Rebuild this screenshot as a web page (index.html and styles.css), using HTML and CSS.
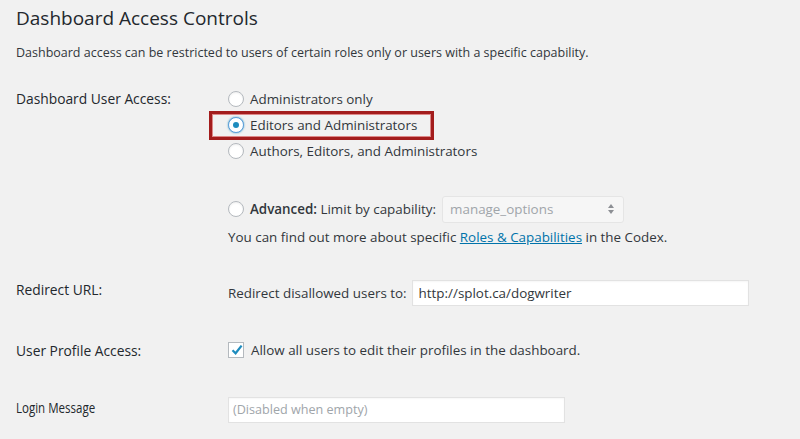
FILE: index.html
```html
<!DOCTYPE html>
<html>
<head>
<meta charset="utf-8">
<link rel="stylesheet" href="styles.css">
</head>
<body>
<div class="page">
  <h2 class="title">Dashboard Access Controls</h2>
  <p class="desc">Dashboard access can be restricted to users of certain roles only or users with a specific capability.</p>

  <div class="row row-access">
    <div class="label label-access">Dashboard User Access:</div>
    <div class="field">
      <label class="opt"><span class="radio"></span><span>Administrators only</span></label>
      <label class="opt opt-marked"><span class="radio checked"></span><span>Editors and Administrators</span></label>
      <label class="opt"><span class="radio"></span><span>Authors, Editors, and Administrators</span></label>
      <div class="opt opt-adv">
        <span class="radio"></span><span><b>Advanced:</b> Limit by capability:</span>
        <span class="select"><span>manage_options</span>
          <svg class="arrows" width="8" height="12" viewBox="0 0 8 12"><path d="M4 1 L7 5 H1 Z" fill="#8c8f94"/><path d="M4 11 L7 7 H1 Z" fill="#8c8f94"/></svg>
        </span>
      </div>
      <div class="codex">You can find out more about specific <a href="#">Roles &amp; Capabilities</a> in the Codex.</div>
    </div>
  </div>

  <div class="row row-redirect">
    <div class="label">Redirect URL:</div>
    <div class="field inline">
      <span>Redirect disallowed users to:</span>
      <span class="input url">http://splot.ca/dogwriter</span>
    </div>
  </div>

  <div class="row row-profile">
    <div class="label">User Profile Access:</div>
    <div class="field inline">
      <span class="check"><svg width="14" height="14" viewBox="0 0 14 14"><path d="M2.5 7.2 L5.6 10.3 L11.6 2.6" fill="none" stroke="#1e8cbe" stroke-width="2.2"/></svg></span>
      <span>Allow all users to edit their profiles in the dashboard.</span>
    </div>
  </div>

  <div class="row row-login">
    <div class="label label-login"><span class="squeeze">Login Message</span></div>
    <div class="field">
      <span class="input msg">(Disabled when empty)</span>
    </div>
  </div>
</div>
</body>
</html>
```

FILE: styles.css
```css
html, body {
  margin: 0;
  padding: 0;
  background: #f1f1f1;
}
body {
  font-family: "Open Sans", "Noto Sans", sans-serif;
  color: #23282d;
  font-size: 13px;
  width: 800px;
  height: 439px;
  overflow: hidden;
}
.page {
  padding-left: 16px;
}
.title {
  margin: 0;
  padding-top: 6px;
  font-size: 19px;
  font-weight: 400;
  line-height: 24px;
  color: #23282d;
}
.desc {
  margin: 13px 0 0;
  font-size: 12.5px;
  line-height: 20px;
  color: #32373c;
}
.row {
  display: flex;
  align-items: flex-start;
}
.label {
  width: 212px;
  flex: none;
  font-size: 13.8px;
  line-height: 20px;
  color: #23282d;
}
.label-access {
  padding-top: 3px;
}
.label-login {
  font-size: 14.6px;
  padding-top: 0;
}
.squeeze {
  display: inline-block;
  transform: scaleX(0.79);
  transform-origin: left center;
}
.row-access {
  margin-top: 23px;
}
.field {
  font-size: 13.4px;
  color: #32373c;
}
.opt {
  display: flex;
  align-items: center;
  height: 26px;
  position: relative;
}
.radio {
  width: 14px;
  height: 14px;
  border: 1px solid #b4b9be;
  border-radius: 50%;
  background: #fff;
  box-shadow: inset 0 1px 2px rgba(0,0,0,0.07);
  margin-right: 6px;
  flex: none;
  position: relative;
}
.radio.checked {
  border-color: #5b9dd9;
  box-shadow: 0 0 2px rgba(30,140,190,0.8);
}
.radio.checked::after {
  content: "";
  position: absolute;
  left: 4px;
  top: 4px;
  width: 6px;
  height: 6px;
  border-radius: 50%;
  background: #1e8cbe;
}
.opt-marked::before {
  content: "";
  position: absolute;
  left: -19px;
  top: -1px;
  width: 219px;
  height: 23px;
  border: 3px solid #a31c1c;
  box-shadow: inset 0 0 0 1px #d88;
  pointer-events: none;
}
.opt-adv {
  margin-top: 31px;
  height: 28px;
}
.opt-adv b {
  font-weight: 600;
}
.select {
  margin-left: 6px;
  width: 182px;
  height: 27px;
  box-sizing: border-box;
  border: 1px solid #e5e5e5;
  background: #f6f6f6;
  border-radius: 3px;
  display: flex;
  align-items: center;
  justify-content: space-between;
  padding: 0 8px 0 7px;
  color: #a0a5aa;
}
.codex {
  margin-top: 4px;
  line-height: 20px;
}
.codex a {
  color: #0073aa;
  text-decoration: underline;
}
.inline {
  display: flex;
  align-items: center;
}
.row-redirect {
  margin-top: 33px;
}
.input {
  display: block;
  box-sizing: border-box;
  background: #fff;
  border: 1px solid #e2e2e2;
  box-shadow: inset 0 1px 2px rgba(0,0,0,0.04);
  height: 26px;
  line-height: 24px;
  padding: 0 6px;
  font-size: 13.4px;
}
.url {
  margin-left: 5px;
  width: 337px;
  color: #32373c;
}
.row-profile {
  margin-top: 35px;
}
.check {
  width: 14px;
  height: 14px;
  border: 1px solid #b4b9be;
  background: #fff;
  margin-right: 7px;
  position: relative;
  flex: none;
}
.check svg {
  position: absolute;
  left: 1px;
  top: 0;
}
.row-login {
  margin-top: 36px;
}
.msg {
  width: 337px;
  color: #a0a5aa;
  padding-left: 4px;
  font-size: 12.6px;
}
```
